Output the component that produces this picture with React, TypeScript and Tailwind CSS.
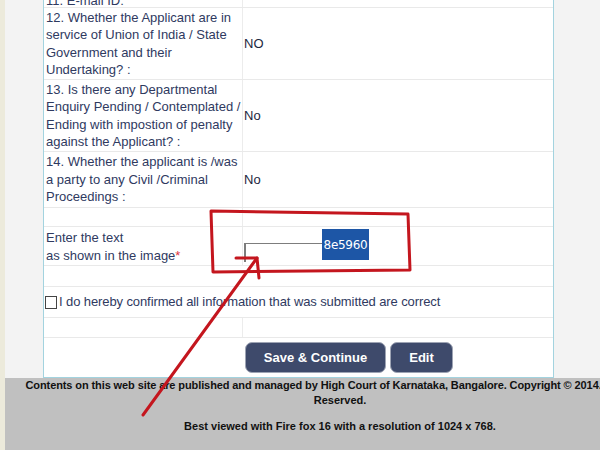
import React from "react";

const label = "text-[13px] leading-[17.5px] text-[#2f3a5f] whitespace-nowrap";
const value = "text-[13px] text-[#1c2740]";

function Row({
  h,
  left,
  right,
  divider = true,
}: {
  h: string;
  left?: React.ReactNode;
  right?: React.ReactNode;
  divider?: boolean;
}) {
  return (
    <div className={`flex border-b border-[#e9e9e9] ${h}`}>
      <div
        className={`flex w-[199px] items-center pl-[2px] ${divider ? "border-r border-[#ececec]" : ""}`}
      >
        {left}
      </div>
      <div className="flex flex-1 items-center pl-[1px]">{right}</div>
    </div>
  );
}

export default function App() {
  return (
    <div className="relative h-[450px] w-[600px] overflow-hidden bg-[#f3f3f3] font-['Liberation_Sans',Arial,sans-serif]">
      <div className="flex h-full">
        {/* beige strip on the far left */}
        <div className="w-[5px] shrink-0 bg-[#eceadb]" />

        <div className="flex min-w-0 flex-1 flex-col">
          <div className="pl-[38px]">
            <div className="-mt-[14px] w-[511px] border-x border-b border-[#a3d3df] bg-white">
              <Row
                h="h-[22px]"
                left={<p className={`${label} pt-[8px]`}>11. E-mail ID:</p>}
              />
              <Row
                h="h-[72px]"
                left={
                  <p className={label}>
                    12. Whether the Applicant are in
                    <br />
                    service of Union of India / State
                    <br />
                    Government and their
                    <br />
                    Undertaking? :
                  </p>
                }
                right={<span className={value}>NO</span>}
              />
              <Row
                h="h-[72px]"
                left={
                  <p className={label}>
                    13. Is there any Departmental
                    <br />
                    Enquiry Pending / Contemplated /
                    <br />
                    Ending with impostion of penalty
                    <br />
                    against the Applicant? :
                  </p>
                }
                right={<span className={value}>No</span>}
              />
              <Row
                h="h-[56px]"
                left={
                  <p className={label}>
                    14. Whether the applicant is /was
                    <br />
                    a party to any Civil /Criminal
                    <br />
                    Proceedings :
                  </p>
                }
                right={<span className={value}>No</span>}
              />
              <Row h="h-[19px]" />
              <div className="flex h-[39px] border-b border-[#e9e9e9]">
                <div className="flex w-[199px] items-center border-r border-[#ececec] pl-[2px] pt-[1px]">
                  <p className="text-[13px] leading-[18px] text-[#2f3a5f] whitespace-nowrap">
                    Enter the text
                    <br />
                    as shown in the image<span className="text-[#e0353d]">*</span>
                  </p>
                </div>
                <div className="flex flex-1 items-end pb-[3px] pl-[1px]">
                  <div className="h-[19px] w-[78px] border-l-2 border-t border-[#7d7d7d] bg-white" />
                  <div className="mb-[2px] flex h-[31px] w-[47px] items-center justify-center bg-[#1d56a6] font-['DejaVu_Sans',sans-serif] text-[12px] tracking-[-0.3px] text-white">
                    8e5960
                  </div>
                </div>
              </div>
              <Row h="h-[21px]" divider={false} />
              <div className="flex h-[31px] items-center gap-[2px] border-b border-[#e9e9e9] pl-[1px]">
                <span className="h-[13px] w-[12px] border border-[#444] bg-white" />
                <span className="text-[13px] tracking-[-0.1px] text-[#2f3a5f]">
                  I do hereby confirmed all information that was submitted are correct
                </span>
              </div>
              <Row h="h-[20px]" />
              <div className="flex h-[39px] items-center">
                <div className="w-[199px]" />
                <div className="ml-[2px] flex gap-[4px]">
                  <button className="h-[31px] w-[141px] rounded-[7px] border border-[#9ea4b4] bg-[#3e4a6b] text-[13px] font-bold text-white">
                    Save &amp; Continue
                  </button>
                  <button className="h-[31px] w-[63px] rounded-[7px] border border-[#9ea4b4] bg-[#3e4a6b] text-[13px] font-bold text-white">
                    Edit
                  </button>
                </div>
              </div>
            </div>
          </div>

          {/* footer */}
          <div className="h-[72px] overflow-hidden bg-[#c0c0c0]">
            <div className="w-[670px] text-center text-[11px] font-bold leading-[15px] text-[#111]">
              <p className="whitespace-nowrap tracking-[-0.1px]">
                Contents on this web site are published and managed by High Court of Karnataka, Bangalore. Copyright © 2014. All Rights
              </p>
              <p>Reserved.</p>
              <p className="mt-[11px]">Best viewed with Fire fox 16 with a resolution of 1024 x 768.</p>
            </div>
          </div>
        </div>
      </div>

      {/* red hand-drawn annotation */}
      <svg
        className="pointer-events-none absolute inset-0"
        width={600}
        height={450}
        viewBox="0 0 600 450"
        fill="none"
        stroke="#c4161e"
        strokeWidth={3}
        strokeLinecap="round"
        strokeLinejoin="round"
      >
        <path d="M211 211 L408 214 L410 270 L213 272 Z" />
        <path d="M143 415 L257 258" />
        <path d="M236 258 L257 258 L259 278" />
      </svg>
    </div>
  );
}
